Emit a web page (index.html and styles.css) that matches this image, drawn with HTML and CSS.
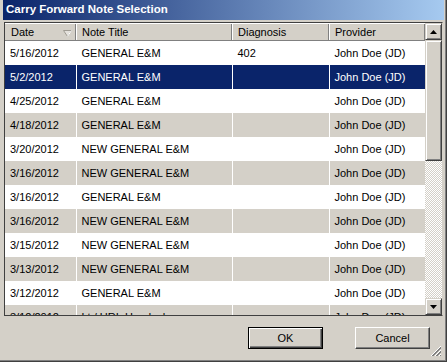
FILE: index.html
```html
<!DOCTYPE html>
<html lang="en">
<head>
  <meta charset="UTF-8">
  <title>Carry Forward Note Selection</title>
  <link rel="stylesheet" href="styles.css">
</head>
<body>
  <div class="window">
    <div class="titlebar">Carry Forward Note Selection</div>

    <div class="listview">
      <div class="list-area">
        <table class="notes">
          <colgroup>
            <col class="col-date">
            <col class="col-title">
            <col class="col-diag">
            <col class="col-prov">
          </colgroup>
          <thead>
            <tr>
              <th>
                <span class="th-label">Date</span>
                <svg class="sort-arrow" width="9" height="7" viewBox="0 0 9 7">
                  <polygon points="0.5,0.5 8.5,0.5 4.5,6.5" fill="#e4e1dc" stroke="#a09c94" stroke-width="1"/>
                  <line x1="4.5" y1="6.5" x2="8.5" y2="0.5" stroke="#ffffff" stroke-width="1"/>
                </svg>
              </th>
              <th>Note Title</th>
              <th>Diagnosis</th>
              <th>Provider</th>
            </tr>
          </thead>
          <tbody>
            <tr><td>5/16/2012</td><td>GENERAL E&amp;M</td><td>402</td><td>John Doe (JD)</td></tr>
            <tr class="selected"><td>5/2/2012</td><td>GENERAL E&amp;M</td><td></td><td>John Doe (JD)</td></tr>
            <tr><td>4/25/2012</td><td>GENERAL E&amp;M</td><td></td><td>John Doe (JD)</td></tr>
            <tr><td>4/18/2012</td><td>GENERAL E&amp;M</td><td></td><td>John Doe (JD)</td></tr>
            <tr><td>3/20/2012</td><td>NEW GENERAL E&amp;M</td><td></td><td>John Doe (JD)</td></tr>
            <tr><td>3/16/2012</td><td>NEW GENERAL E&amp;M</td><td></td><td>John Doe (JD)</td></tr>
            <tr><td>3/16/2012</td><td>GENERAL E&amp;M</td><td></td><td>John Doe (JD)</td></tr>
            <tr><td>3/16/2012</td><td>NEW GENERAL E&amp;M</td><td></td><td>John Doe (JD)</td></tr>
            <tr><td>3/15/2012</td><td>NEW GENERAL E&amp;M</td><td></td><td>John Doe (JD)</td></tr>
            <tr><td>3/13/2012</td><td>NEW GENERAL E&amp;M</td><td></td><td>John Doe (JD)</td></tr>
            <tr><td>3/12/2012</td><td>GENERAL E&amp;M</td><td></td><td>John Doe (JD)</td></tr>
            <tr><td>3/12/2012</td><td>Lt / URI: Headache</td><td></td><td>John Doe (JD)</td></tr>
          </tbody>
        </table>
      </div>

      <!-- vertical scrollbar -->
      <div class="scrollbar">
        <div class="sb-btn">
          <svg width="7" height="4" viewBox="0 0 7 4"><polygon points="3.5,0 7,4 0,4" fill="#000"/></svg>
        </div>
        <div class="sb-thumb"></div>
        <div class="sb-track"></div>
        <div class="sb-btn">
          <svg width="7" height="4" viewBox="0 0 7 4"><polygon points="0,0 7,0 3.5,4" fill="#000"/></svg>
        </div>
      </div>
    </div>

    <div class="footer">
      <button class="btn default">OK</button>
      <button class="btn">Cancel</button>
      <svg class="grip" width="12" height="12" viewBox="0 0 12 12">
        <line x1="11" y1="1" x2="1" y2="11" stroke="#ffffff"/>
        <line x1="11" y1="2" x2="2" y2="11" stroke="#808080"/>
        <line x1="11" y1="3" x2="3" y2="11" stroke="#808080"/>
        <line x1="11" y1="5" x2="5" y2="11" stroke="#ffffff"/>
        <line x1="11" y1="6" x2="6" y2="11" stroke="#808080"/>
        <line x1="11" y1="7" x2="7" y2="11" stroke="#808080"/>
        <line x1="11" y1="9" x2="9" y2="11" stroke="#ffffff"/>
        <line x1="11" y1="10" x2="10" y2="11" stroke="#808080"/>
      </svg>
    </div>
  </div>
</body>
</html>
```

FILE: styles.css
```css
body {
  margin: 0;
  padding: 0;
  background-color: #d4d0c8;
  font-family: "Liberation Sans", Arial, sans-serif;
  font-size: 11px;
  color: #000;
}
.window {
  width: 447px;
  height: 362px;
  box-sizing: border-box;
  background-color: #d4d0c8;
  padding: 0 3px 3px 3px;
  border-right: 1px solid #404040;
  border-bottom: 1px solid #404040;
  box-shadow: inset -1px -1px 0 #808080;
  display: flex;
  flex-direction: column;
}
.titlebar {
  height: 20px;
  line-height: 19px;
  padding-left: 3px;
  color: white;
  font-weight: bold;
  font-size: 11.5px;
  background: linear-gradient(to right, #0a246a, #a6caf0);
  margin-right: -1px;
}
/* list box */
.listview {
  margin-top: 2px;
  margin-left: 1px;
  height: 294px;
  box-sizing: border-box;
  border: 1px solid #404040;
  border-right-color: #d4d0c8;
  display: flex;
  background-color: white;
}
.list-area {
  flex: 1;
  overflow: hidden;
}
.notes {
  border-collapse: collapse;
  table-layout: fixed;
  width: 420px;
}
.col-date { width: 71px; }
.col-title { width: 156px; }
.col-diag { width: 97px; }
.col-prov { width: 96px; }
.notes th {
  height: 17px;
  padding: 0 0 0 6px;
  text-align: left;
  font-weight: normal;
  background-color: #d4d0c8;
  border-top: 1px solid #ffffff;
  border-bottom: 1px solid #808080;
  box-shadow: inset -1px 0 0 #808080, inset 1px 0 0 #ffffff;
  white-space: nowrap;
  box-sizing: border-box;
}
.notes th:first-child {
  box-shadow: inset -1px 0 0 #808080;
}
.th-label {
  display: inline-block;
  width: 49px;
}
.sort-arrow {
  vertical-align: -1px;
}
.notes td {
  height: 24px;
  padding: 0 0 0 5px;
  white-space: nowrap;
  overflow: hidden;
  border-right: 1px solid #ffffff;
  box-sizing: border-box;
}
.notes tbody tr:nth-child(even) {
  background-color: #d4d0c8;
}
.notes tbody tr.selected {
  background-color: #0a246a;
  color: white;
}
/* scrollbar */
.scrollbar {
  width: 17px;
  display: flex;
  flex-direction: column;
  background-color: #d4d0c8;
}
.sb-btn,
.sb-thumb {
  box-sizing: border-box;
  background-color: #d4d0c8;
  border-top: 1px solid #d4d0c8;
  border-left: 1px solid #d4d0c8;
  border-right: 1px solid #404040;
  border-bottom: 1px solid #404040;
  box-shadow: inset 1px 1px 0 #ffffff, inset -1px -1px 0 #808080;
}
.sb-btn {
  height: 17px;
  display: flex;
  align-items: center;
  justify-content: center;
}
.sb-thumb {
  height: 121px;
}
.sb-track {
  flex: 1;
  background-color: #ffffff;
  background-image: repeating-conic-gradient(#d4d0c8 0 25%, #ffffff 0 50%);
  background-size: 2px 2px;
}
/* buttons */
.footer {
  flex: 1;
  display: flex;
  align-items: flex-start;
  justify-content: flex-end;
  gap: 32px;
  padding: 11px 13px 0 0;
  position: relative;
}
.btn {
  width: 75px;
  height: 22px;
  font-family: "Liberation Sans", Arial, sans-serif;
  font-size: 11px;
  color: #000;
  background-color: #d4d0c8;
  border: 1px solid;
  border-color: #ffffff #404040 #404040 #ffffff;
  box-shadow: inset -1px -1px 0 #808080;
  padding: 0;
}
.btn.default {
  border: 1px solid #000;
  box-shadow: inset 1px 1px 0 #ffffff, inset -1px -1px 0 #404040, inset -2px -2px 0 #808080;
}
.grip {
  position: absolute;
  right: 1px;
  bottom: 1px;
}
```
